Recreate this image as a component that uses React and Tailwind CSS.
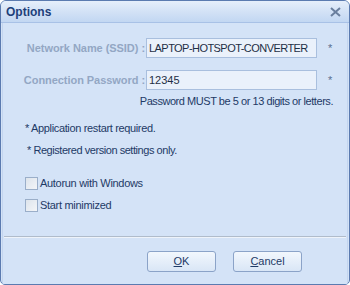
import React from "react";

export default function App() {
  const font = { fontFamily: "'Liberation Sans', Arial, sans-serif" };
  return (
    <div className="w-[350px] h-[285px] bg-white" style={font}>
      <div className="w-[350px] h-[285px] flex flex-col rounded-t-[6px] rounded-b-[5px] border border-[#5b7bb0] bg-[#d4e3f7] overflow-hidden">
        {/* title bar */}
        <div className="h-[22px] shrink-0 flex items-center justify-between pl-[5px] pr-[8px] bg-gradient-to-b from-[#e6effb] via-[#d3e2f6] to-[#c2d7f2] border-b border-[#a8c1e6]">
          <span className="text-[12px] font-bold text-[#1e3f7a] leading-none">Options</span>
          <svg width="11" height="10" viewBox="0 0 11 10">
            <path d="M1 1 L10 9 M10 1 L1 9" stroke="#6a7f9e" strokeWidth="2" />
          </svg>
        </div>
        {/* body */}
        <div className="flex-1 flex flex-col mx-[1px] border-l border-r border-[#c3d5ef] bg-[#d4e3f7]">
          <div className="flex flex-col pt-[15px] pl-[22px] pr-[16px]">
            <div className="flex items-center h-[20px]">
              <div className="w-[120px] shrink-0 flex justify-end">
                <span className="shrink-0 text-[11px] font-bold text-[#93a7c4] whitespace-nowrap tracking-[-0.05px]">Network Name (SSID) :</span>
              </div>
              <div className="ml-[1px] shrink-0 w-[171px] h-[20px] bg-[#eaf1fb] border border-[#a9bfde] flex items-center pl-[2px] text-[11px] text-[#1f2f45] whitespace-nowrap tracking-[-0.55px]">LAPTOP-HOTSPOT-CONVERTER</div>
              <span className="ml-[11px] text-[11px] text-[#5a6f8f]">*</span>
            </div>
            <div className="flex items-center h-[20px] mt-[12px]">
              <div className="w-[120px] shrink-0 flex justify-end">
                <span className="shrink-0 text-[11px] font-bold text-[#93a7c4] whitespace-nowrap tracking-[-0.05px]">Connection Password :</span>
              </div>
              <div className="ml-[1px] shrink-0 w-[171px] h-[20px] bg-[#eaf1fb] border border-[#a9bfde] flex items-center pl-[2px] text-[11px] text-[#1f2f45] whitespace-nowrap">12345</div>
              <span className="ml-[11px] text-[11px] text-[#5a6f8f]">*</span>
            </div>
            <div className="flex justify-end mt-[4px]">
              <span className="text-[11px] leading-[14px] text-[#1e3a66] tracking-[-0.45px] mr-[-2px] whitespace-nowrap">Password MUST be 5 or 13 digits or letters.</span>
            </div>
          </div>
          <div className="flex flex-col pl-[22px] mt-[13px] text-[11px] text-[#1e3a66] tracking-[-0.35px]">
            <span className="leading-[14px]">* Application restart required.</span>
            <span className="leading-[14px] mt-[8px] ml-[2px] tracking-[-0.45px]">* Registered version settings only.</span>
          </div>
          <div className="flex flex-col pl-[22px] mt-[20px] text-[11px] text-[#1e3a66] tracking-[-0.3px] gap-[9px]">
            <label className="flex items-center gap-[2px] leading-[13px]">
              <span className="w-[13px] h-[13px] border border-[#9aaec9] bg-gradient-to-br from-[#dde4ec] to-[#f3f5f8]" />
              <span>Autorun with Windows</span>
            </label>
            <label className="flex items-center gap-[2px] leading-[13px]">
              <span className="w-[13px] h-[13px] border border-[#9aaec9] bg-gradient-to-br from-[#dde4ec] to-[#f3f5f8]" />
              <span>Start minimized</span>
            </label>
          </div>
          <div className="flex-1" />
          <div className="border-t border-[#b0bccb] border-b border-b-[#eef3fa] mx-[1px]" />
          <div className="flex justify-end gap-[17px] pr-[45px] pt-[13px] pb-[12px]">
            <button className="w-[69px] h-[21px] rounded-[3px] border border-[#8ba3c8] bg-gradient-to-b from-[#f2f7fd] to-[#d9e6f6] text-[11px] text-[#1e3a66]">
              <span className="underline">O</span>K
            </button>
            <button className="w-[69px] h-[21px] rounded-[3px] border border-[#8ba3c8] bg-gradient-to-b from-[#f2f7fd] to-[#d9e6f6] text-[11px] text-[#1e3a66]">
              <span className="underline">C</span>ancel
            </button>
          </div>
        </div>
      </div>
    </div>
  );
}
